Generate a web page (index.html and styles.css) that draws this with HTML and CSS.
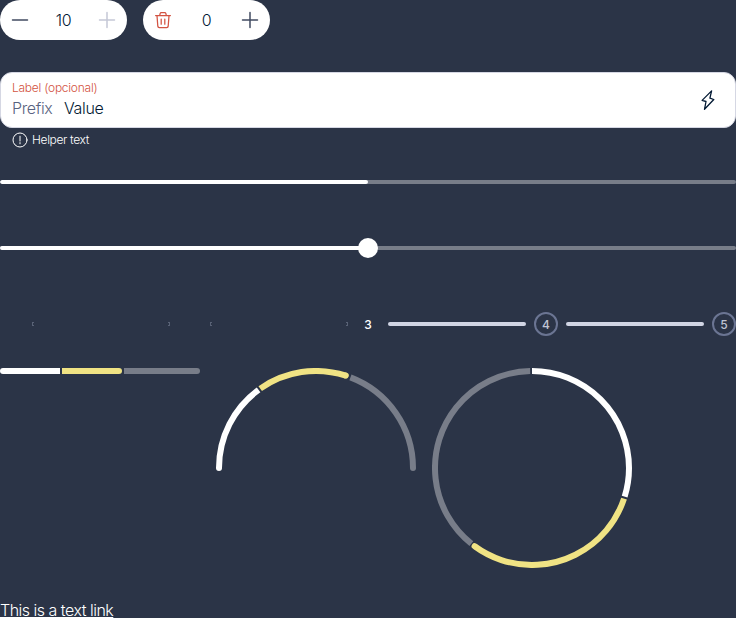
FILE: index.html
```html
<!DOCTYPE html>
<html lang="en">
<head>
<meta charset="utf-8">
<title>Components</title>
<link rel="stylesheet" href="styles.css">
</head>
<body>
<main class="page">
  <div class="counters">
    <div class="counter">
      <svg class="icon" viewBox="0 0 20 20"><path d="M2.5 10h15"/></svg>
      <span class="count">10</span>
      <svg class="icon disabled" viewBox="0 0 20 20"><path d="M2.5 10h15M10 2.5v15"/></svg>
    </div>
    <div class="counter">
      <svg class="icon danger" viewBox="0 0 20 20"><path d="M2.6 5.6h14.8M6.7 5.4l.5-2q.2-.9 1.1-.9h3.4q.9 0 1.1.9l.5 2M4 5.8l.8 10.3q.1 1.4 1.5 1.4h7.4q1.4 0 1.5-1.4L16 5.8M8.2 9v5.2M11.8 9v5.2"/></svg>
      <span class="count">0</span>
      <svg class="icon" viewBox="0 0 20 20"><path d="M2.5 10h15M10 2.5v15"/></svg>
    </div>
  </div>

  <div class="field">
    <div class="field-text">
      <span class="label">Label (opcional)</span>
      <span class="entry"><span class="prefix">Prefix</span><span class="value">Value</span></span>
    </div>
    <svg class="bolt" viewBox="0 0 24 24"><path d="M15.6 2.9 6.1 12.4l3.9 1.1-1.5 7.8 9.3-9.8-3.9-1.3z"/></svg>
  </div>
  <div class="helper">
    <svg class="helper-icon" viewBox="0 0 16 16"><circle cx="8" cy="8" r="7"/><path d="M8 4.2v4.9M8 10.6v1.2"/></svg>
    <span class="helper-text">Helper text</span>
  </div>

  <div class="progress"><div class="progress-fill"></div></div>
  <div class="slider"><div class="progress"><div class="progress-fill flat"></div></div><div class="thumb"></div></div>

  <div class="stepper">
    <div class="step-slot"></div>
    <div class="step-line empty"></div>
    <div class="step-slot"></div>
    <div class="step-line empty"></div>
    <div class="step-slot current">3</div>
    <div class="step-line"></div>
    <div class="step-slot pending">4</div>
    <div class="step-line"></div>
    <div class="step-slot pending">5</div>
  </div>

  <div class="meters">
    <div class="meter-bar"><i class="seg first"></i><i class="seg second"></i><i class="seg rest"></i></div>
    <svg class="meter-arc" viewBox="0 0 200 104">
      <g transform="rotate(180 100 100)">
        <circle class="ring white" cx="100" cy="100" r="97" pathLength="360" stroke-dasharray="53.7 400"/>
        <circle class="ring yellow" cx="100" cy="100" r="97" pathLength="360" stroke-dasharray="53 400" transform="rotate(54.9 100 100)"/>
        <circle class="ring grey" cx="100" cy="100" r="97" pathLength="360" stroke-dasharray="69.2 400" transform="rotate(110.8 100 100)"/>
      </g>
      <path class="white-fill" d="M0 100h6a3 3 0 0 1-6 0z"/>
      <path class="grey-fill" d="M194 100h6a3 3 0 0 1-6 0z"/>
      <circle class="yellow-fill" cx="197" cy="100" r="3" transform="rotate(-72.1 100 100)"/>
    </svg>
    <svg class="meter-ring" viewBox="0 0 200 200">
      <g transform="rotate(-90 100 100)">
        <circle class="ring white" cx="100" cy="100" r="97" pathLength="360" stroke-dasharray="107.3 400"/>
        <circle class="ring yellow" cx="100" cy="100" r="97" pathLength="360" stroke-dasharray="107.9 400" transform="rotate(108.4 100 100)"/>
        <circle class="ring grey" cx="100" cy="100" r="97" pathLength="360" stroke-dasharray="140.2 400" transform="rotate(218.7 100 100)"/>
        <circle class="yellow-fill" cx="197" cy="100" r="3" transform="rotate(216.3 100 100)"/>
      </g>
    </svg>
  </div>

  <a class="link">This is a text link</a>
</main>
</body>
</html>
```
FILE: styles.css
```css
*, *::before, *::after { box-sizing: border-box; }
body {
  margin: 0;
  height: 618px;
  overflow: hidden;
  background: #2b3447;
  color: #fff;
  font-family: Inter, "Liberation Sans", sans-serif;
}
.page { display: flex; flex-direction: column; }
svg { display: block; flex: none; fill: none; }

.counters { display: flex; gap: 16px; }
.counter {
  width: 127px;
  height: 40px;
  padding: 0 10px;
  display: flex;
  align-items: center;
  justify-content: space-between;
  border-radius: 20px;
  background: #fff;
}
.icon { width: 20px; height: 20px; stroke: #414b61; stroke-width: 1.5; stroke-linecap: round; stroke-linejoin: round; }
.disabled { stroke: #c5c8d6; }
.danger { stroke: #d35342; stroke-width: 1.25; }
.count { color: #031a34; font-size: 16px; font-weight: 300; line-height: 24px; letter-spacing: -.3px; }

.field {
  height: 56px;
  margin-top: 32px;
  padding: 0 15px 0 11px;
  display: flex;
  align-items: center;
  justify-content: space-between;
  border: 1px solid #d5d7e3;
  border-radius: 12px;
  background: #fff;
}
.field-text { display: flex; flex-direction: column; }
.label { color: #d35342; font-size: 12px; font-weight: 300; line-height: 16px; letter-spacing: -.25px; }
.entry { display: flex; gap: 12px; font-size: 16px; font-weight: 300; line-height: 24px; letter-spacing: -.35px; }
.prefix { width: 40px; color: #596380; }
.value { color: #031a34; }
.bolt { width: 24px; height: 24px; stroke: #031a34; stroke-width: 1.3; stroke-linejoin: round; }
.helper { height: 16px; margin: 4px 0 0 12px; display: flex; align-items: center; gap: 4px; }
.helper-icon { width: 16px; height: 16px; stroke: #fff; stroke-width: 1; stroke-linecap: round; }
.helper-text { font-size: 12px; font-weight: 300; line-height: 16px; letter-spacing: -.35px; }

.progress { height: 4px; border-radius: 2px; background: #787d89; overflow: hidden; }
.helper + .progress { margin-top: 32px; }
.progress-fill { width: 50%; height: 4px; border-radius: 2px; background: #fff; }
.flat { border-radius: 0; }
.slider { position: relative; margin-top: 54px; padding: 8px 0; }
.thumb {
  position: absolute;
  top: 0;
  left: calc(50% - 10px);
  width: 20px;
  height: 20px;
  border-radius: 50%;
  background: #fff;
}

.stepper { height: 24px; margin-top: 54px; display: flex; align-items: center; gap: 8px; }
.step-slot {
  width: 24px;
  height: 24px;
  flex: none;
  display: flex;
  align-items: center;
  justify-content: center;
  border-radius: 50%;
  font-size: 12px;
  font-weight: 500;
}
.pending { border: 2px solid #6b7593; color: #c0c4d3; }
.step-line { flex: 1; height: 4px; border-radius: 2px; background: #d1d5e4; }
.empty { display: flex; justify-content: space-between; border-radius: 0; background: none; }
.empty::before, .empty::after { content: ""; width: 2px; height: 4px; border: 1px solid #596276; }
.empty::before { border-right: 0; }
.empty::after { border-left: 0; }

.meters { height: 200px; margin-top: 32px; display: flex; align-items: flex-start; gap: 16px; }
.meter-bar { width: 200px; height: 6px; display: flex; gap: 2px; }
.seg { display: block; height: 6px; }
.first { width: 60px; border-radius: 3px 0 0 3px; background: #fff; }
.second { width: 60px; border-radius: 0 3px 3px 0; background: #f0e384; }
.rest { flex: 1; border-radius: 0 3px 3px 0; background: #787d89; }
.meter-arc { width: 200px; height: 104px; }
.meter-ring { width: 200px; height: 200px; }
.ring { stroke-width: 6; }
.white { stroke: #fff; }
.yellow { stroke: #f0e384; }
.grey { stroke: #787d89; }
.white-fill { fill: #fff; }
.yellow-fill { fill: #f0e384; }
.grey-fill { fill: #787d89; }

.link {
  margin-top: 32px;
  align-self: flex-start;
  font-size: 16px;
  font-weight: 300;
  line-height: 20px;
  letter-spacing: -.5px;
  text-decoration: underline;
  text-decoration-thickness: 1px;
  text-underline-offset: 1px;
}
```
